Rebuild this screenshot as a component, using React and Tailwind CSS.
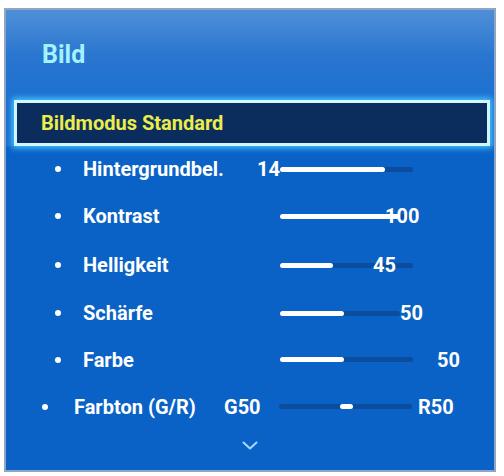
const rows = [
  { label: "Hintergrundbel.", h: "h-[46px]", kind: "left", value: "14", fill: 105 },
  { label: "Kontrast", h: "h-[48px]", kind: "over", value: "100", fill: 120, shift: "ml-[-28px]" },
  { label: "Helligkeit", h: "h-[50px]", kind: "over", value: "45", fill: 53, shift: "ml-[-40px]" },
  { label: "Schärfe", h: "h-[46px]", kind: "after", value: "50", fill: 64, track: 120, shift: "ml-0" },
  { label: "Farbe", h: "h-[47px]", kind: "after", value: "50", fill: 64, shift: "ml-[24px]" },
];

const font = { fontFamily: 'Roboto, "Open Sans", sans-serif' };

function Track({ width = 133, fill }) {
  return (
    <div className="h-[5px] bg-[#0b4d9c] rounded-full" style={{ width }}>
      <div className="h-[5px] bg-white rounded-full" style={{ width: fill }} />
    </div>
  );
}

function Row({ row }) {
  return (
    <div className={`flex items-center pl-[49px] ${row.h}`}>
      <span className="w-[6px] h-[6px] rounded-full bg-white" />
      <span className="ml-[22px] text-white text-[20px] font-bold leading-none" style={{ width: row.kind === "left" ? 174 : 197 }}>
        {row.label}
      </span>
      {row.kind === "left" && (
        <span className="w-[23px] text-white text-[20px] font-bold leading-none">{row.value}</span>
      )}
      <Track width={row.track} fill={row.fill} />
      {row.kind !== "left" && (
        <span className={`relative z-10 text-white text-[20px] font-bold leading-none ${row.shift}`}>{row.value}</span>
      )}
    </div>
  );
}

export default function App() {
  return (
    <div className="w-[504px] h-[476px] bg-white pt-[8px] pl-[4px]" style={font}>
      <div className="w-[492px] h-[464px] border-2 border-[#8ea5c4] bg-[#0a62c6] overflow-hidden flex flex-col">
        <div className="h-[90px] bg-gradient-to-b from-[#4f8fd8] via-[#2a76cf] to-[#1c70d2] pl-[36px] pt-[32px]">
          <div className="text-[25px] font-bold leading-none text-[#a4f2ff]">Bild</div>
        </div>
        <div className="pl-[8px] pr-[4px] bg-[#1a6dd0]">
          <div className="h-[46px] border-[3px] border-[#d2f6ff] bg-[#0a2d5e] shadow-[0_0_6px_2px_#46c8ff] flex items-center pl-[24px]">
            <span className="text-[20px] font-bold text-[#ecec4a] leading-none">Bildmodus Standard</span>
          </div>
        </div>
        <div className="flex flex-col">
          {rows.map((r) => (
            <Row key={r.label} row={r} />
          ))}
          <div className="flex items-center pl-[36px] h-[47px]">
            <span className="w-[6px] h-[6px] rounded-full bg-white" />
            <span className="ml-[26px] w-[150px] text-white text-[20px] font-bold leading-none">Farbton (G/R)</span>
            <span className="w-[55px] text-white text-[20px] font-bold leading-none">G50</span>
            <div className="w-[133px] h-[5px] bg-[#0b4d9c] rounded-full flex">
              <div className="ml-[61px] w-[13px] h-[5px] bg-white rounded-sm" />
            </div>
            <span className="ml-[6px] text-white text-[20px] font-bold leading-none">R50</span>
          </div>
          <div className="flex justify-center pt-[11px]">
            <svg width="16" height="9" viewBox="0 0 16 9" fill="none">
              <path d="M1.5 1.5 L8 7.5 L14.5 1.5" stroke="#a9d9ff" strokeWidth="2" strokeLinecap="round" strokeLinejoin="round" />
            </svg>
          </div>
        </div>
      </div>
    </div>
  );
}
